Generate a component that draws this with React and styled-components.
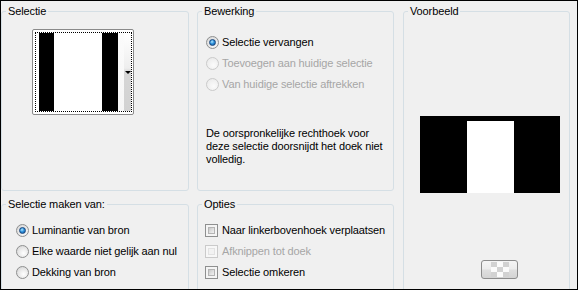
import styled, { createGlobalStyle } from 'styled-components';

const GlobalStyle = createGlobalStyle`
  html, body {
    margin: 0;
    padding: 0;
    background: #f0f0f0;
  }
  body {
    font-family: "Liberation Sans", Arial, sans-serif;
    font-size: 11px;
  }
`;

const Dialog = styled.div`
  box-sizing: border-box;
  width: 578px;
  height: 290px;
  border: 1px solid #000;
  background: #f0f0f0;
  overflow: hidden;
  display: grid;
  grid-template-columns: 188px 197px 168px;
  grid-template-rows: 186px 120px;
  column-gap: 8px;
  row-gap: 7px;
  padding-top: 4px;
  color: #000;
  font-family: "Liberation Sans", Arial, sans-serif;
  font-size: 11px;
  line-height: 13px;
  letter-spacing: -0.12px;
`;

const Group = styled.fieldset`
  margin: 0;
  min-width: 0;
  padding: 0;
  border: 1px solid #d5dfe5;
  border-radius: 3px;
`;

const PreviewGroup = styled(Group)`
  grid-column: 3;
  grid-row: 1 / span 2;
  margin-left: 1px;
`;

const Legend = styled.legend`
  margin-left: 4px;
  padding: 0 2px;
  line-height: 13px;
`;

const GroupBody = styled.div`
  display: flex;
  flex-direction: column;
  align-items: flex-start;
  padding: ${(p) => p.$pad || '0'};
`;

const Option = styled.label`
  display: flex;
  align-items: center;
  gap: ${(p) => p.$gap || 3}px;
  height: 21px;
  white-space: nowrap;
  color: ${(p) => (p.$disabled ? '#a6a6a6' : '#000')};
`;

const RadioMark = styled.span`
  box-sizing: border-box;
  flex: none;
  width: 13px;
  height: 13px;
  border-radius: 50%;
  border: 1px solid ${(p) => (p.$disabled ? '#cacaca' : '#8e8f8f')};
  background: ${(p) =>
    p.$disabled
      ? 'radial-gradient(circle at 60% 65%, #fbfbfb 0, #ededed 70%, #e2e2e2 100%)'
      : 'radial-gradient(circle at 60% 65%, #ffffff 0, #e6e6e6 55%, #cdcdcd 100%)'};
  display: flex;
  align-items: center;
  justify-content: center;

  &::after {
    content: '';
    display: ${(p) => (p.$checked ? 'block' : 'none')};
    box-sizing: border-box;
    width: 7px;
    height: 7px;
    border-radius: 50%;
    border: 1px solid #17457c;
    background: radial-gradient(circle at 40% 35%, #b4e8ff 0, #2e92dc 45%, #0c4d96 100%);
  }
`;

const CheckMark = styled.span`
  box-sizing: border-box;
  flex: none;
  width: 13px;
  height: 13px;
  border: 1px solid ${(p) => (p.$disabled ? '#cacaca' : '#8e8f8f')};
  background: ${(p) => (p.$disabled ? '#f7f7f7' : '#f4f4f4')};
  padding: 2px;
  display: flex;

  &::after {
    content: '';
    flex: 1;
    border: 1px solid ${(p) => (p.$disabled ? '#e2e2e2' : '#b4b4b4')};
    background: ${(p) =>
      p.$disabled
        ? '#f2f2f2'
        : 'linear-gradient(135deg, #c6c6c6 0, #dedede 50%, #f1f1f1 100%)'};
  }
`;

const Thumb = styled.button`
  box-sizing: border-box;
  width: 102px;
  height: 86px;
  margin: 0;
  padding: 2px 1px 2px 2px;
  border: 1px solid #8a8a8a;
  border-radius: 2px;
  background: #fff;
  display: flex;
`;

const FocusRect = styled.div`
  flex: 1;
  display: flex;
  border: 1px dotted #000;
  padding-left: 3px;
`;

const Swatch = styled.div`
  width: ${(p) => p.$w}px;
  background: ${(p) => p.$color};
`;

const DropStrip = styled.div`
  display: flex;
  width: 13px;
`;

const StripEdge = styled.div`
  width: 6px;
  background: linear-gradient(#fbfbfb, #f6f6f6);
`;

const StripArrow = styled.div`
  width: 7px;
  display: flex;
  align-items: center;
  justify-content: center;
  background: linear-gradient(#ffffff 0, #eeeeee 45%, #d6d6d6 50%, #d2d2d2 100%);

  &::after {
    content: '';
    border-left: 3px solid transparent;
    border-right: 3px solid transparent;
    border-top: 3px solid #000;
    margin-top: 1px;
  }
`;

const Note = styled.p`
  margin: 32px 0 0;
  line-height: 13px;
  white-space: nowrap;
`;

const PreviewCanvas = styled.div`
  box-sizing: border-box;
  width: 140px;
  height: 77px;
  padding: 5px 0 0 47px;
  background: #000;
  display: flex;
`;

const PreviewBar = styled.div`
  width: 47px;
  background: #fff;
`;

const TransparencyButton = styled.button`
  box-sizing: border-box;
  width: 37px;
  height: 19px;
  margin: 67px 0 0 61px;
  padding: 0;
  border: 1px solid #8c8c8c;
  border-radius: 3px;
  background: linear-gradient(#f5f5f5, #ededed 45%, #dedede 55%, #d3d3d3);
  display: flex;
  align-items: center;
  justify-content: center;
`;

function Radio({ label, checked, disabled }) {
  return (
    <Option $disabled={disabled}>
      <RadioMark $checked={checked} $disabled={disabled} />
      {label}
    </Option>
  );
}

function Check({ label, disabled }) {
  return (
    <Option $gap={4} $disabled={disabled}>
      <CheckMark $disabled={disabled} />
      {label}
    </Option>
  );
}

function Checker() {
  const cells = [];
  for (let r = 0; r < 3; r++) {
    for (let c = 0; c < 3; c++) {
      cells.push(
        <rect
          key={`${r}-${c}`}
          x={c * 6}
          y={r * 5}
          width="6"
          height="5"
          fill={(r + c) % 2 === 0 ? '#d2d2d2' : '#fbfbfb'}
        />
      );
    }
  }
  return (
    <svg width="18" height="15" viewBox="0 0 18 15">
      {cells}
    </svg>
  );
}

export default function App() {
  return (
    <>
      <GlobalStyle />
      <Dialog>
        <Group>
          <Legend>Selectie</Legend>
          <GroupBody $pad="11px 0 0 30px">
            <Thumb type="button">
              <FocusRect>
                <Swatch $w={15} $color="#000" />
                <Swatch $w={48} $color="#fff" />
                <Swatch $w={16} $color="#000" />
                <DropStrip>
                  <StripEdge />
                  <StripArrow />
                </DropStrip>
              </FocusRect>
            </Thumb>
          </GroupBody>
        </Group>

        <Group>
          <Legend>Bewerking</Legend>
          <GroupBody $pad="14px 0 0 8px">
            <Radio label="Selectie vervangen" checked />
            <Radio label="Toevoegen aan huidige selectie" disabled />
            <Radio label="Van huidige selectie aftrekken" disabled />
            <Note>
              De oorspronkelijke rechthoek voor
              <br />
              deze selectie doorsnijdt het doek niet
              <br />
              volledig.
            </Note>
          </GroupBody>
        </Group>

        <PreviewGroup>
          <Legend>Voorbeeld</Legend>
          <GroupBody $pad="98px 0 0 16px">
            <PreviewCanvas>
              <PreviewBar />
            </PreviewCanvas>
            <TransparencyButton type="button">
              <Checker />
            </TransparencyButton>
          </GroupBody>
        </PreviewGroup>

        <Group>
          <Legend>Selectie maken van:</Legend>
          <GroupBody $pad="9px 0 0 14px">
            <Radio label="Luminantie van bron" checked />
            <Radio label="Elke waarde niet gelijk aan nul" />
            <Radio label="Dekking van bron" />
          </GroupBody>
        </Group>

        <Group>
          <Legend>Opties</Legend>
          <GroupBody $pad="9px 0 0 7px">
            <Check label="Naar linkerbovenhoek verplaatsen" />
            <Check label="Afknippen tot doek" disabled />
            <Check label="Selectie omkeren" />
          </GroupBody>
        </Group>
      </Dialog>
    </>
  );
}
